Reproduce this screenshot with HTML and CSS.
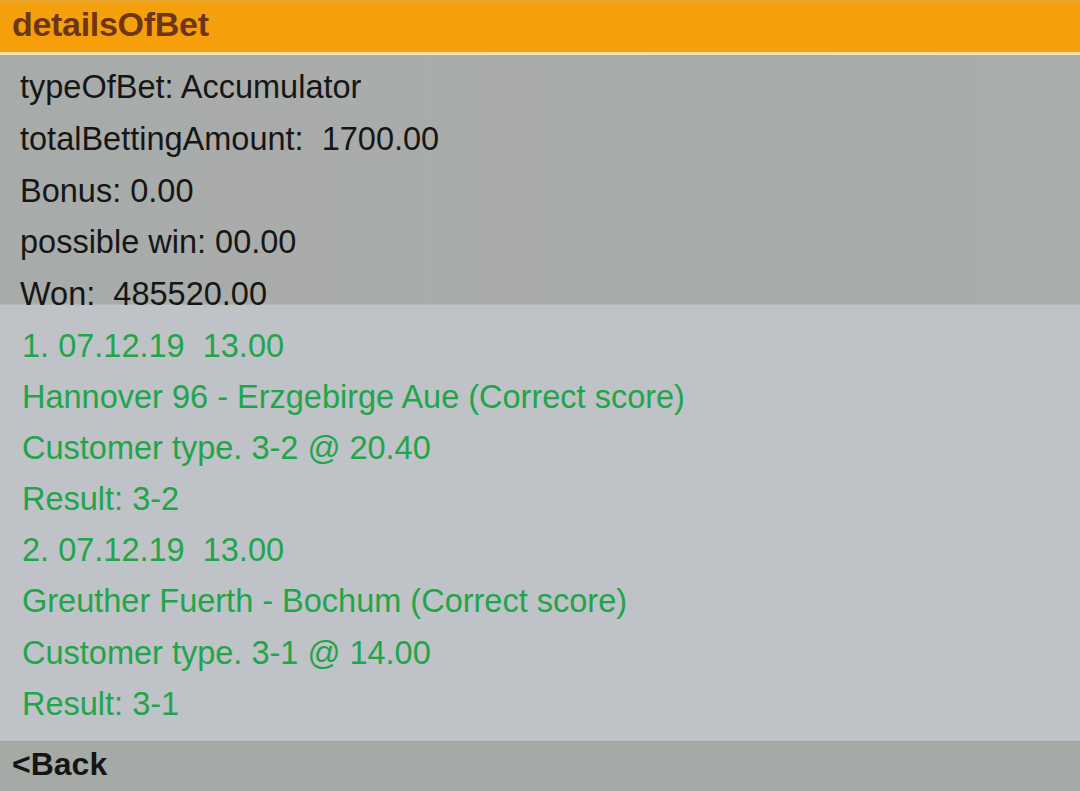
FILE: index.html
```html
<!DOCTYPE html>
<html>
<head>
<meta charset="utf-8">
<link rel="stylesheet" href="styles.css">
</head>
<body>
<div class="screen">
  <header class="titlebar"><span class="title">detailsOfBet</span></header>
  <section class="summary">
    <div class="row">typeOfBet: Accumulator</div>
    <div class="row">totalBettingAmount:&nbsp; 1700.00</div>
    <div class="row">Bonus: 0.00</div>
    <div class="row">possible win: 00.00</div>
    <div class="row">Won:&nbsp; 485520.00</div>
  </section>
  <section class="events">
    <div class="row">1. 07.12.19&nbsp; 13.00</div>
    <div class="row">Hannover 96 - Erzgebirge Aue (Correct score)</div>
    <div class="row">Customer type. 3-2 @ 20.40</div>
    <div class="row">Result: 3-2</div>
    <div class="row">2. 07.12.19&nbsp; 13.00</div>
    <div class="row">Greuther Fuerth - Bochum (Correct score)</div>
    <div class="row">Customer type. 3-1 @ 14.00</div>
    <div class="row">Result: 3-1</div>
  </section>
  <footer class="footer"><span class="back">&lt;Back</span></footer>
</div>
</body>
</html>
```
FILE: styles.css
```css
html, body {
  margin: 0;
  padding: 0;
}
body {
  width: 1080px;
  height: 791px;
  overflow: hidden;
  font-family: "Liberation Sans", Arial, sans-serif;
  background: #a7aaa8;
}
.screen {
  display: flex;
  flex-direction: column;
  height: 791px;
}
.titlebar {
  box-sizing: border-box;
  background: linear-gradient(#e7a735 0, #f4a10e 3px, #f79e08 45px, #f0a020 52px);
  border-bottom: 3px solid #f6e0a2;
  height: 55px;
  display: flex;
  align-items: center;
  padding-left: 12px;
  padding-bottom: 3px;
}
.title {
  font-size: 34px;
  font-weight: bold;
  color: #6e3618;
  letter-spacing: -0.3px;
}
.summary {
  position: relative;
  z-index: 1;
  height: 249px;
  box-sizing: border-box;
  padding: 7px 0 0 20px;
  background: linear-gradient(90deg, #a7aba9 0%, #a9acaa 40%, #a6aaa8 70%, #a9adab 100%);
  color: #161616;
}
.summary .row {
  font-size: 32.5px;
  line-height: 51.75px;
  white-space: nowrap;
}
.events {
  height: 437px;
  box-sizing: border-box;
  padding: 16px 0 0 22px;
  background: #bfc2c6;
  border-top: 1px solid #b4b7b8;
  color: #1fa54a;
}
.events .row {
  font-size: 32.5px;
  line-height: 51.1px;
  white-space: nowrap;
}
.footer {
  flex: 1;
  background: #a6aaa7;
  border-top: 1px solid #9fa3a2;
  display: flex;
  align-items: center;
  padding-left: 12px;
  padding-bottom: 4px;
}
.back {
  font-size: 32px;
  font-weight: bold;
  color: #151515;
}
```
